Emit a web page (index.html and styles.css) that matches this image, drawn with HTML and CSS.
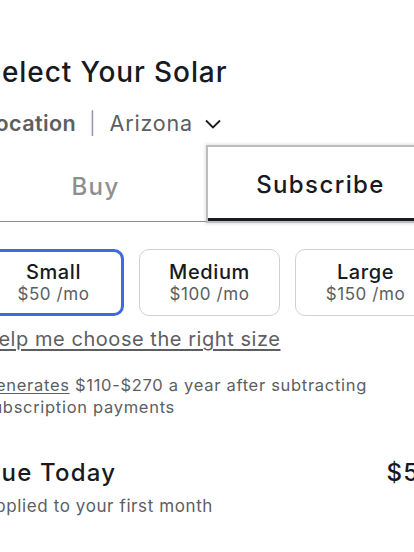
FILE: index.html
```html
<!DOCTYPE html>
<html lang="en">
<head>
<meta charset="utf-8">
<link rel="stylesheet" href="styles.css">
</head>
<body>
<main class="panel">
  <h1 class="title">Select Your Solar</h1>
  <div class="location">
    <span class="loc-label">Location</span>
    <span class="loc-sep">|</span>
    <span class="loc-value">Arizona</span>
    <svg class="chev" width="18" height="12" viewBox="0 0 18 12"><path d="M2 2.5 L9 9.5 L16 2.5" fill="none" stroke="#171a20" stroke-width="1.8"/></svg>
  </div>
  <div class="tabs">
    <button class="tab">Buy</button>
    <button class="tab active">Subscribe</button>
  </div>
  <div class="sizes">
    <button class="size selected"><span class="size-name">Small</span><span class="size-price">$50 /mo</span></button>
    <button class="size"><span class="size-name">Medium</span><span class="size-price">$100 /mo</span></button>
    <button class="size"><span class="size-name">Large</span><span class="size-price">$150 /mo</span></button>
  </div>
  <a class="help">Help me choose the right size</a>
  <p class="note"><span class="u">Generates</span> $110-$270 a year after subtracting subscription payments</p>
  <div class="due">
    <div class="due-row"><span class="due-label">Due Today</span><span class="due-amt">$50</span></div>
    <div class="due-sub">Applied to your first month</div>
  </div>
</main>
</body>
</html>
```
FILE: styles.css
```css
html, body { margin: 0; padding: 0; overflow: hidden; background: #fff; }
body { font-family: Inter, "Noto Sans", sans-serif; color: #171a20; }
.panel { margin-left: -17px; width: 453px; padding-top: 54px; }
.title { margin: 0; font-size: 28px; font-weight: 500; line-height: 36px; letter-spacing: 0.9px; }
.location { display: flex; align-items: center; gap: 13px; margin-top: 19px; font-size: 21.5px; line-height: 28px; color: #5c5e62; letter-spacing: 0.8px; }
.loc-label { font-weight: 600; letter-spacing: 0.4px; }
.loc-sep { color: #8e8e8e; font-weight: 300; }
.loc-value { font-weight: 400; }
.chev { margin-left: -2px; margin-top: 2px; }
.tabs { display: grid; grid-template-columns: 225px 225px; margin-top: 10px; border-bottom: 1px solid #8e8e8e; }
.tab { height: 74px; border: 0; background: #fff; font-family: inherit; font-size: 24px; font-weight: 500; color: #8e8e8e; padding: 4px 0 0; letter-spacing: 1.4px; }
.tab.active { color: #171a20; border-bottom: 3px solid #171a20; margin-bottom: -1px; box-shadow: 0 0 0 2px #bdbdbd, 0 0 3px 3px rgba(0,0,0,0.12); }
.sizes { display: grid; grid-template-columns: repeat(3, 141px); gap: 15px; margin-top: 27px; }
.size { height: 67px; border: 1px solid #d0d1d2; border-radius: 10px; background: #fff; font-family: inherit; display: flex; flex-direction: column; align-items: center; justify-content: center; padding: 0; letter-spacing: 0.6px; }
.size.selected { border: 3px solid #3e6ae1; }
.size-name { font-size: 20px; font-weight: 500; color: #171a20; line-height: 23px; }
.size-price { font-size: 17px; color: #5c5e62; line-height: 21px; }
.help { display: block; margin-top: 10px; font-size: 20px; line-height: 26px; color: #5c5e62; text-decoration: underline; text-underline-offset: 3px; letter-spacing: 0.55px; }
.note { margin: 22px 0 0; width: 420px; font-size: 16.5px; line-height: 22px; color: #5c5e62; letter-spacing: 0.7px; }
.u { text-decoration: underline; text-underline-offset: 2px; }
.due { margin-top: 40px; }
.due-row { display: flex; justify-content: space-between; font-size: 24px; font-weight: 500; line-height: 30px; padding-right: 0; letter-spacing: 1.2px; }
.due-sub { margin-top: 8px; font-size: 17px; line-height: 20px; color: #5c5e62; letter-spacing: 0.6px; }
```
